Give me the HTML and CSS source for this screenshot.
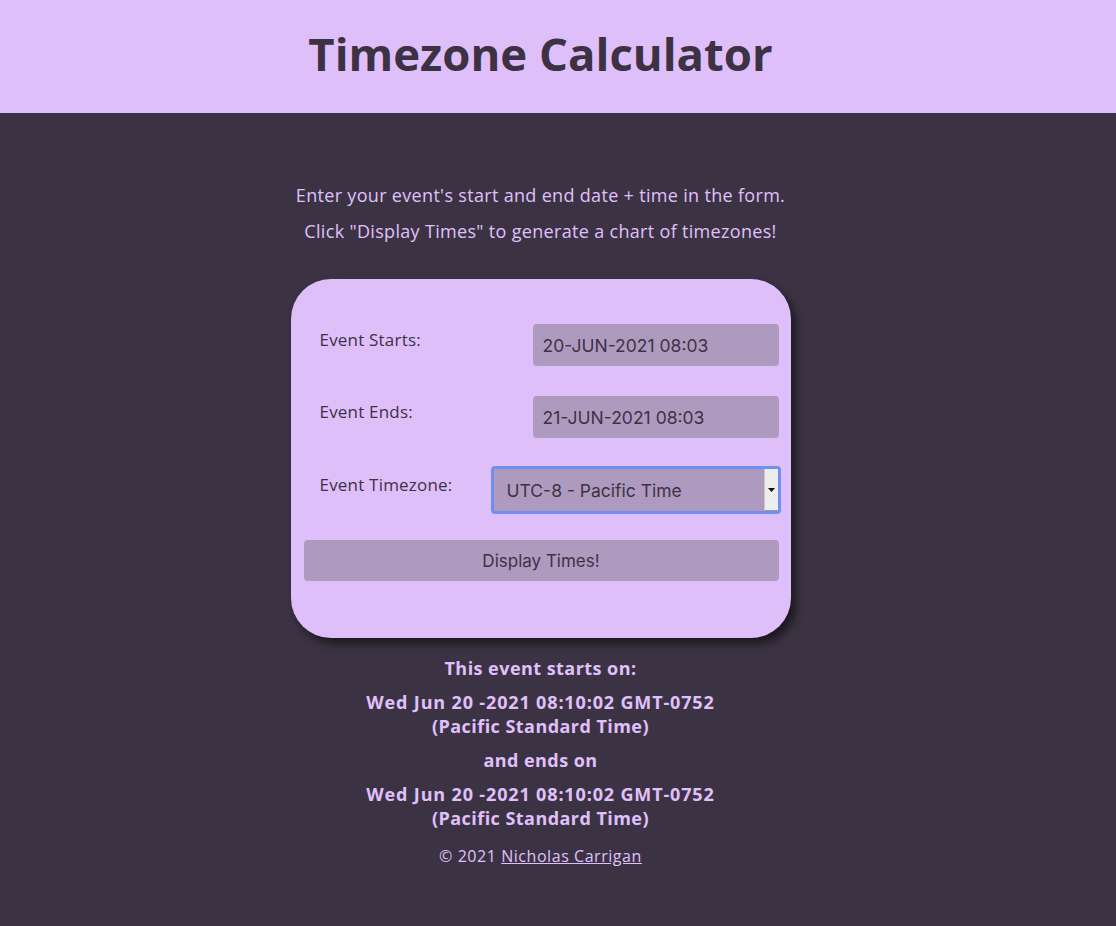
FILE: index.html
```html
<!DOCTYPE html>
<html lang="en">
<head>
<meta charset="utf-8">
<title>Timezone Calculator</title>
<link rel="stylesheet" href="styles.css">
</head>
<body>
<header class="site-header">
  <div class="header-inner">
    <h1 class="title">Timezone Calculator</h1>
  </div>
</header>
<main class="main">
  <p class="intro">Enter your event's start and end date + time in the form.</p>
  <p class="intro">Click "Display Times" to generate a chart of timezones!</p>
  <form class="card">
    <div class="row">
      <label class="label">Event Starts:</label>
      <input class="field" type="text" value="20-JUN-2021 08:03">
    </div>
    <div class="row row-b">
      <label class="label">Event Ends:</label>
      <input class="field" type="text" value="21-JUN-2021 08:03">
    </div>
    <div class="row row-c">
      <label class="label">Event Timezone:</label>
      <div class="select">
        <span class="select-value">UTC-8 - Pacific Time</span>
        <span class="select-arrow"><svg width="7" height="4" viewBox="0 0 7 4"><path d="M0 0H7L3.5 4Z" fill="#111"/></svg></span>
      </div>
    </div>
    <button class="btn" type="button">Display Times!</button>
  </form>
  <section class="results">
    <p class="res">This event starts on:</p>
    <p class="res"><span class="num">Wed Jun 20 -2021 08:10:02 GMT-0752</span><br>(Pacific Standard Time)</p>
    <p class="res">and ends on</p>
    <p class="res"><span class="num">Wed Jun 20 -2021 08:10:02 GMT-0752</span><br>(Pacific Standard Time)</p>
  </section>
  <footer class="footer">© 2021 <a class="link" href="#">Nicholas Carrigan</a></footer>
</main>
</body>
</html>
```

FILE: styles.css
```css
html, body {
  margin: 0;
  padding: 0;
}
body {
  background: #3b3343;
  font-family: "Open Sans", "DejaVu Sans", sans-serif;
  color: #e0c0fb;
  min-height: 926px;
}
.site-header {
  background: #dfbffa;
  height: 113px;
}
.header-inner {
  height: 113px;
  display: flex;
  align-items: center;
  justify-content: center;
  padding-right: 35px;
}
.title {
  margin: 0;
  font-size: 45.5px;
  line-height: 1;
  font-weight: 700;
  color: #3d3244;
  padding-bottom: 6px;
}
.main {
  display: flex;
  flex-direction: column;
  align-items: center;
  padding-right: 35px;
  padding-top: 70px;
}
.intro {
  margin: 0 0 12px;
  font-size: 18px;
  line-height: 24px;
  letter-spacing: 0.32px;
}
.card {
  margin-top: 24px;
  width: 500px;
  height: 359px;
  box-sizing: border-box;
  background: #dfbffa;
  border-radius: 40px;
  box-shadow: 5px 6px 10px rgba(0, 0, 0, 0.55);
  padding: 45px 12px 0 13px;
  display: flex;
  flex-direction: column;
}
.row {
  display: flex;
  align-items: center;
  justify-content: space-between;
}
.row-b { margin-top: 30px; }
.row-c { margin-top: 28px; margin-right: -2px; }
.label {
  padding-left: 16px;
  font-size: 17px;
  letter-spacing: 0.2px;
  color: #3d3244;
  margin-bottom: 12px;
}
.field {
  width: 246px;
  height: 42px;
  box-sizing: border-box;
  border: none;
  border-radius: 4px;
  background: #ae9abf;
  padding: 0 10px;
  font-family: Inter, "Liberation Sans", sans-serif;
  font-size: 17.5px;
  color: #3d3244;
  outline: none;
}
.select {
  width: 290px;
  height: 48px;
  box-sizing: border-box;
  border: 3px solid #6f90f0;
  border-radius: 4px;
  background: #ae9abf;
  display: flex;
  align-items: stretch;
}
.select-value {
  flex: 1;
  display: flex;
  align-items: center;
  padding-left: 13px;
  padding-top: 1px;
  font-family: Inter, "Liberation Sans", sans-serif;
  font-size: 17.5px;
  color: #3d3244;
}
.select-arrow {
  width: 13px;
  background: #ededed;
  border-left: 1px solid #c8c8c8;
  border-bottom: 1px solid #999;
  display: flex;
  align-items: center;
  justify-content: center;
}
.btn {
  margin-top: 26px;
  height: 41px;
  width: 475px;
  border: none;
  border-radius: 4px;
  background: #ae9abf;
  font-family: Inter, "Liberation Sans", sans-serif;
  font-size: 17px;
  color: #3d3244;
  padding-top: 1px;
}
.results {
  margin-top: 18px;
  text-align: center;
}
.res {
  margin: 0 0 10px;
  font-size: 18px;
  line-height: 24px;
  font-weight: 700;
  letter-spacing: 0.45px;
}
.num {
  letter-spacing: 0.85px;
}
.footer {
  margin-top: 4px;
  font-size: 16px;
  line-height: 24px;
  letter-spacing: 0.55px;
}
.link {
  color: #e0c0fb;
}
```
